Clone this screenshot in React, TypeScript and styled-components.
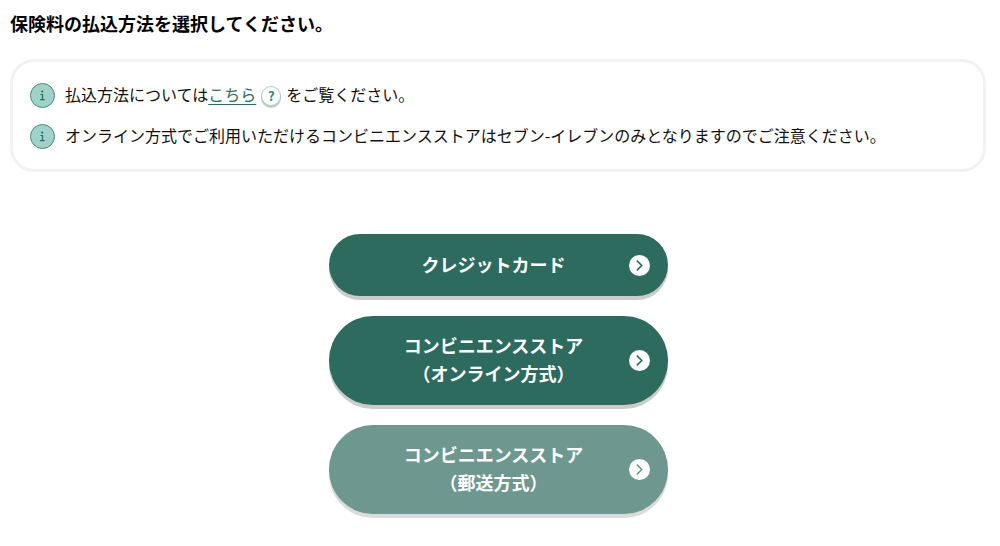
import React from "react";
import styled, { createGlobalStyle } from "styled-components";

const GlobalStyle = createGlobalStyle`
  *, *::before, *::after { box-sizing: border-box; }
  body {
    margin: 0;
    background: #fff;
    color: #111;
    font-family: "Noto Sans CJK JP", sans-serif;
    font-size: 16px;
    line-height: 28px;
  }
`;

const Page = styled.main`
  padding: 9px 14px 28px 10px;
`;

const Title = styled.h1`
  margin: 0;
  color: #000;
  font-size: 18px;
  font-weight: 700;
  line-height: 28px;
`;

const NoticeBox = styled.ul`
  display: flex;
  flex-direction: column;
  gap: 13px;
  margin: 22px 0 0;
  padding: 18px 17px 20px;
  border: 3px solid #f2f2f2;
  border-radius: 24px;
  list-style: none;
`;

const NoticeItem = styled.li`
  display: flex;
  align-items: flex-start;
  gap: 10px;
`;

const IconSlot = styled.span`
  display: flex;
  flex: none;
  align-items: center;
  height: 28px;
  padding-top: 3px;
`;

const NoticeText = styled.p`
  margin: 0;
`;

const GuideLink = styled.a`
  color: #2d6b5f;
  text-decoration: underline;
  text-decoration-thickness: 1px;
  text-underline-offset: 3px;
`;

const HelpButton = styled.button`
  width: 20px;
  height: 20px;
  margin: 0 5px;
  padding: 0;
  border: 1px solid #9fd2c8;
  border-radius: 50%;
  background: #fff;
  box-shadow: 0 2px 0 #c8c8c8;
  color: #3b8073;
  font-family: "Noto Sans CJK JP", sans-serif;
  font-size: 13px;
  font-weight: 700;
  line-height: 18px;
  cursor: pointer;
`;

const MethodList = styled.div`
  display: flex;
  flex-direction: column;
  align-items: center;
  gap: 20px;
  margin-top: 62px;
`;

const MethodButton = styled.button`
  display: flex;
  align-items: center;
  width: 100%;
  max-width: 339px;
  min-height: 62px;
  padding: 15px 18px;
  border: 0;
  border-radius: 44px;
  background: #2d6b5f;
  box-shadow: 0 4px 0 #cbcbcb;
  color: #fff;
  font-family: inherit;
  font-size: 18px;
  font-weight: 700;
  line-height: 28px;
  cursor: pointer;

  &:disabled {
    background: #6e9790;
    box-shadow: 0 4px 0 #dbdbdb;
    cursor: default;
  }
`;

const MethodLabel = styled.span`
  flex: 1;
  padding: 0 0 3px 12px;
  text-align: center;
`;

const InfoIcon = () => (
  <IconSlot>
    <svg width="25" height="25" viewBox="0 0 25 25" aria-hidden="true">
      <circle cx="12.5" cy="12.5" r="12" fill="#9fd2c8" stroke="#4a897d" />
      <circle cx="12.2" cy="8.6" r="1.1" fill="#2d6b5f" />
      <path d="M10.4 11.5h2.1v5M10.1 16.6h4.6" fill="none" stroke="#2d6b5f" strokeWidth="1.2" />
    </svg>
  </IconSlot>
);

const ArrowIcon = ({ color }: { color: string }) => (
  <svg width="21" height="21" viewBox="0 0 21 21" aria-hidden="true">
    <circle cx="10.5" cy="10.5" r="10.5" fill="#fff" />
    <path d="M7.8 5.7l5 4.8-5 4.8" fill="none" stroke={color} strokeWidth="1.6" />
  </svg>
);

type Method = { lines: string[]; disabled?: boolean };

const methods: Method[] = [
  { lines: ["クレジットカード"] },
  { lines: ["コンビニエンスストア", "（オンライン方式）"] },
  { lines: ["コンビニエンスストア", "（郵送方式）"], disabled: true },
];

export default function App() {
  return (
    <>
      <GlobalStyle />
      <Page lang="ja">
        <Title>保険料の払込方法を選択してください。</Title>
        <NoticeBox>
          <NoticeItem>
            <InfoIcon />
            <NoticeText>
              払込方法については<GuideLink href="#guide">こちら</GuideLink>
              <HelpButton type="button">?</HelpButton>
              をご覧ください。
            </NoticeText>
          </NoticeItem>
          <NoticeItem>
            <InfoIcon />
            <NoticeText>
              オンライン方式でご利用いただけるコンビニエンスストアはセブン-イレブンのみとなりますのでご注意ください。
            </NoticeText>
          </NoticeItem>
        </NoticeBox>
        <MethodList>
          {methods.map(({ lines, disabled }) => (
            <MethodButton key={lines.join("")} type="button" disabled={disabled}>
              <MethodLabel>
                {lines.map((line, i) => (
                  <React.Fragment key={line}>
                    {i > 0 && <br />}
                    {line}
                  </React.Fragment>
                ))}
              </MethodLabel>
              <ArrowIcon color={disabled ? "#6e9790" : "#2d6b5f"} />
            </MethodButton>
          ))}
        </MethodList>
      </Page>
    </>
  );
}
